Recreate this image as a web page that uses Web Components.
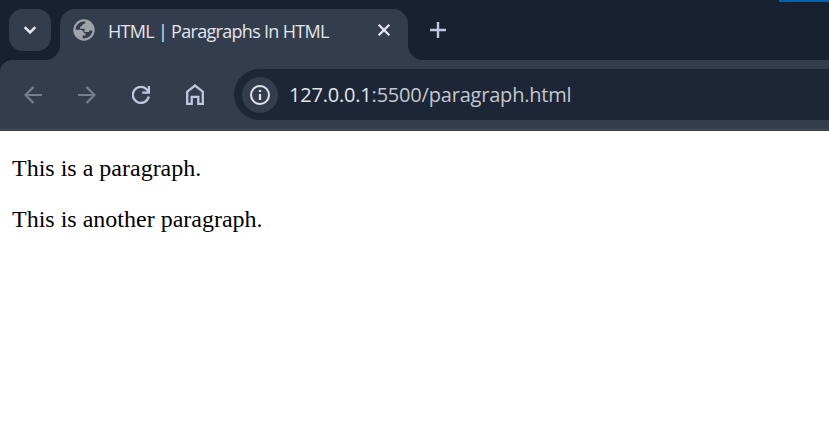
<!DOCTYPE html>
<html lang="en">
<head>
<meta charset="utf-8">
<title>HTML | Paragraphs In HTML</title>
<style>
html,body{margin:0;height:100%;overflow:hidden;background:#fff}
</style>
</head>
<body>
<browser-window>
  <tab-strip slot="tabs"><browser-tab>HTML | Paragraphs In HTML</browser-tab></tab-strip>
  <nav-bar slot="nav"><url-box><span slot="host">127.0.0.1</span><span slot="path">:5500/paragraph.html</span></url-box></nav-bar>
  <web-page><text-paragraph>This is a paragraph.</text-paragraph><text-paragraph>This is another paragraph.</text-paragraph></web-page>
</browser-window>
<script>
function define(name, html) {
  const t = document.createElement('template');
  t.innerHTML = html;
  customElements.define(name, class extends HTMLElement {
    constructor() {
      super();
      this.attachShadow({mode: 'open'}).append(t.content.cloneNode(true));
    }
  });
}

const icons = {
  down: [14, 10, '<path d="M1.7 2.2 7 7.5l5.3-5.3" stroke-width="2.6"/>'],
  globe: [22, 22, '<circle cx="11" cy="11" r="9.6" stroke-width="2.2"/><path stroke="none" fill="currentColor" d="M12.500 1.500c.4 2.500-.4 3.300-2.700 3.800-.5 1.700-1.200 2.200-2.700 2.400v2h4.400v3.300h4.700v-1.500h4.600A10 10 0 0 0 12.500 1.500ZM1.500 10.700H7c2.200 0 3.900 1.400 3.900 3.500h1.700v2.300H9.700v4C4.500 20 1.500 15.500 1.500 10.700Z"/>'],
  close: [14, 14, '<path d="m1.700 1.700 10.600 10.600m0-10.600L1.700 12.300" stroke-width="2.300"/>'],
  plus: [16, 16, '<path d="M8 0v16M0 8h16" stroke-width="2.400"/>'],
  back: [18, 18, '<path d="M18 9H1.500M9.500 1 1.500 9l8 8" stroke-width="2.200"/>'],
  forward: [18, 18, '<path d="M0 9h16.500M8.500 1l8 8-8 8" stroke-width="2.200"/>'],
  reload: [18, 18, '<path d="M16.700 10.500A8 8 0 1 1 14.800 3.500L17 6M17 0v6.700h-6.700" stroke-width="2.300"/>'],
  home: [18, 21, '<path d="M1.200 19.800V7.700L9 1.500l7.800 6.200v12.100h-4.500v-7H5.700v7Z" stroke-width="2.300"/>'],
  info: [20, 20, '<circle cx="10" cy="10" r="9" stroke-width="2"/><path d="M10 9v6M10 5v2" stroke-width="2.200"/>']
};
customElements.define('ui-icon', class extends HTMLElement {
  constructor() {
    super();
    this.attachShadow({mode: 'open'});
  }
  connectedCallback() {
    const [w, h, body] = icons[this.getAttribute('name')];
    this.shadowRoot.innerHTML = `<style>:host{display:block;flex:none}svg{display:block}</style><svg width="${w}" height="${h}" viewBox="0 0 ${w} ${h}" fill="none" stroke="currentColor">${body}</svg>`;
  }
});

define('browser-window', `<style>
  :host{display:flex;flex-direction:column;width:829px;height:439px;background:#fff}
</style><slot name="tabs"></slot><slot name="nav"></slot><slot></slot>`);

define('tab-strip', `<style>
  :host{display:flex;box-sizing:border-box;height:60px;padding:9px 0 0 9px;background:linear-gradient(#0063b1,#0063b1) 779px 0/50px 2px no-repeat #182130;color:#e3e5ec}
  .search{box-sizing:border-box;width:42px;height:42px;border-radius:14px;background:#343d4d;display:grid;place-items:center}
  slot{display:block}
  .tabs{margin-left:9px}
  .add{margin:13px 0 0 22px;color:#c0c6df}
</style><div class="search"><ui-icon name="down"></ui-icon></div><div class="tabs"><slot></slot></div><ui-icon class="add" name="plus"></ui-icon>`);

define('browser-tab', `<style>
  :host{position:relative;display:flex;align-items:center;box-sizing:border-box;width:348px;height:51px;padding:0 17px 9px 13px;border-radius:15px 15px 0 0;background:#343d4d;color:#e3e5ec;font:18px/24px "Open Sans","Noto Sans",sans-serif}
  :host::before,:host::after{content:"";position:absolute;bottom:0;width:15px;height:15px}
  :host::before{left:-15px;background:radial-gradient(circle at 0 0,transparent 14.500px,#343d4d 15.500px)}
  :host::after{right:-15px;background:radial-gradient(circle at 100% 0,transparent 14.500px,#343d4d 15.500px)}
  .globe{color:#9fa4aa}
  .title{flex:1;margin:1px 0 0 13px;white-space:nowrap;letter-spacing:-.7px}
</style><ui-icon class="globe" name="globe"></ui-icon><div class="title"><slot></slot></div><ui-icon name="close"></ui-icon>`);

define('nav-bar', `<style>
  :host{display:block;background:#182130}
  .bar{display:flex;align-items:center;box-sizing:border-box;height:71px;padding:0 0 1px 24px;border-radius:12px 0 0 0;background:#343d4d;border-bottom:1px solid #343d4d;box-shadow:inset 0 -1px #464d5b;color:#c0c6df}
  .off{color:#777e8f}
  .forward,.reload,.home{margin-left:36px}
  slot{display:block;flex:1;margin-left:30px}
</style><div class="bar"><ui-icon class="off" name="back"></ui-icon><ui-icon class="off forward" name="forward"></ui-icon><ui-icon class="reload" name="reload"></ui-icon><ui-icon class="home" name="home"></ui-icon><slot></slot></div>`);

define('url-box', `<style>
  :host{display:flex;align-items:center;box-sizing:border-box;height:51px;padding-left:8px;border-radius:26px 0 0 26px;background:#1d2636;color:#e3e5ec;font:20px/28px "Open Sans","Noto Sans",sans-serif}
  .info{width:36px;height:36px;border-radius:50%;background:#343d4d;display:grid;place-items:center}
  .url{margin-left:11px;white-space:nowrap;letter-spacing:-.2px}
  .path{color:#c4c7cf}
</style><div class="info"><ui-icon name="info"></ui-icon></div><div class="url"><slot name="host"></slot><span class="path"><slot name="path"></slot></span></div>`);

define('web-page', `<style>
  :host{display:flex;flex-direction:column;gap:24px;flex:1;padding:24px 12px;background:#fff}
</style><slot></slot>`);

define('text-paragraph', `<style>
  :host{display:block;color:#000;font:24px/27px "Liberation Serif","Times New Roman",serif}
</style><slot></slot>`);
</script>
</body>
</html>
